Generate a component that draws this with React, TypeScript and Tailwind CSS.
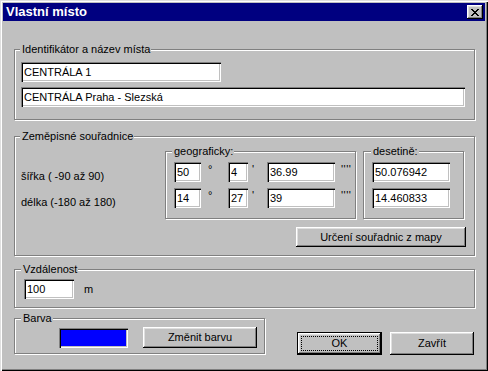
import type { ReactNode } from 'react';

const sunken =
  'shadow-[inset_1px_1px_0_#808080,inset_2px_2px_0_#000,inset_-1px_-1px_0_#fff,inset_-2px_-2px_0_#c0c0c0]';
const raised =
  'shadow-[inset_-1px_-1px_0_#000,inset_1px_1px_0_#fff,inset_-2px_-2px_0_#808080,inset_2px_2px_0_#dfdfdf]';

function Field({ value, className = '' }: { value: string; className?: string }) {
  return (
    <input
      readOnly
      value={value}
      className={`h-[20px] bg-white pl-[3px] pr-[2px] outline-none text-black ${sunken} ${className}`}
    />
  );
}

function Btn({ children, className = '' }: { children: ReactNode; className?: string }) {
  return (
    <button type="button" className={`bg-[#c0c0c0] flex items-center justify-center ${raised} ${className}`}>
      {children}
    </button>
  );
}

function Group({
  title,
  legend,
  className = '',
  children,
}: {
  title: string;
  legend: string;
  className?: string;
  children: ReactNode;
}) {
  return (
    <fieldset className={`border border-[#808080] shadow-[1px_1px_0_#fff,inset_1px_1px_0_#fff] ${className}`}>
      <legend className={`pl-[2px] pr-[1px] leading-[13px] bg-[#c0c0c0] ${legend}`}>{title}</legend>
      {children}
    </fieldset>
  );
}

const CloseGlyph = () => (
  <svg width="8" height="7" viewBox="0 0 8 7" shapeRendering="crispEdges">
    <path
      fill="#000"
      d="M0 0h2v1H0zM6 0h2v1H6zM1 1h2v1H1zM5 1h2v1H5zM2 2h4v1H2zM3 3h2v1H3zM2 4h4v1H2zM1 5h2v1H1zM5 5h2v1H5zM0 6h2v1H0zM6 6h2v1H6z"
    />
  </svg>
);

export default function App() {
  return (
    <div className="w-[488px] h-[371px] p-[3px] bg-[#c0c0c0] text-[11px] text-black font-['Liberation_Sans',Arial,sans-serif] flex flex-col shadow-[inset_1px_1px_0_#dfdfdf,inset_2px_2px_0_#fff,inset_-1px_-1px_0_#000,inset_-2px_-2px_0_#808080]">
      {/* title bar */}
      <div className="h-[18px] bg-[#000080] flex items-center pl-[3px] pr-[2px]">
        <span className="flex-1 text-white font-bold text-[13px] leading-[18px]">Vlastní místo</span>
        <Btn className="w-[16px] h-[14px]">
          <CloseGlyph />
        </Btn>
      </div>

      <div className="flex flex-col pl-[11px]">
        <Group title="Identifikátor a název místa" legend="ml-[5px]" className="mt-[22px] w-[461px] pb-[12px]">
          <div className="flex flex-col items-start gap-[5px] mt-[6px] ml-[6px]">
            <Field value="CENTRÁLA 1" className="w-[200px]" />
            <Field value="CENTRÁLA Praha - Slezská" className="w-[444px]" />
          </div>
        </Group>

        <Group title="Zeměpisné souřadnice" legend="ml-[5px]" className="mt-[10px] w-[461px] pb-[8px]">
          <div className="flex flex-col items-start">
            <div className="flex mt-[2px]">
              <div className="w-[150px] pl-[6px] pt-[21px] flex flex-col gap-[6px]">
                <div className="h-[20px] leading-[20px]">šířka ( -90 až 90)</div>
                <div className="h-[20px] leading-[20px]">délka (-180 až 180)</div>
              </div>

              <Group title="geograficky:" legend="ml-[6px]" className="w-[191px] pb-[10px]">
                <div className="flex flex-col gap-[6px] mt-[4px] ml-[8px]">
                  {[
                    ['50', '4', '36.99'],
                    ['14', '27', '39'],
                  ].map(([d, m, s]) => (
                    <div key={d} className="flex items-start">
                      <Field value={d} className="w-[27px]" />
                      <span className="w-[27px] pl-[7px] leading-[13px] pt-[1px]">°</span>
                      <Field value={m} className="w-[20px]" />
                      <span className="w-[19px] pl-[4px] leading-[13px] pt-[1px]">'</span>
                      <Field value={s} className="w-[68px]" />
                      <span className="pl-[6px] leading-[13px] pt-[1px] tracking-[0.5px]">''''</span>
                    </div>
                  ))}
                </div>
              </Group>

              <Group title="desetině:" legend="ml-[7px]" className="ml-[7px] w-[101px] pb-[10px]">
                <div className="flex flex-col gap-[6px] mt-[4px] ml-[8px]">
                  <Field value="50.076942" className="w-[78px]" />
                  <Field value="14.460833" className="w-[78px]" />
                </div>
              </Group>
            </div>

            <Btn className="ml-[281px] mt-[8px] w-[170px] h-[20px]">Určení souřadnic z mapy</Btn>
          </div>
        </Group>

        <Group title="Vzdálenost" legend="ml-[6px]" className="mt-[7px] w-[461px] pb-[8px]">
          <div className="flex items-center mt-[3px] ml-[9px]">
            <Field value="100" className="w-[50px]" />
            <span className="ml-[10px]">m</span>
          </div>
        </Group>

        <div className="flex items-end mt-[4px]">
          <Group title="Barva" legend="ml-[6px]" className="w-[251px] pb-[5px]">
            <div className="flex items-start mt-[2px] ml-[44px]">
              <div className={`w-[69px] h-[20px] mt-[1px] bg-[#0000ff] ${sunken}`} />
              <Btn className="ml-[15px] w-[114px] h-[21px]">Změnit barvu</Btn>
            </div>
          </Group>

          <Btn className="ml-[32px] mb-[-1px] w-[85px] h-[23px] border border-black p-[3px]">
            <span className="flex-1 self-stretch flex items-center justify-center border border-dotted border-black">
              OK
            </span>
          </Btn>
          <Btn className="ml-[8px] mb-[-1px] w-[84px] h-[23px]">Zavřít</Btn>
        </div>
      </div>
    </div>
  );
}
